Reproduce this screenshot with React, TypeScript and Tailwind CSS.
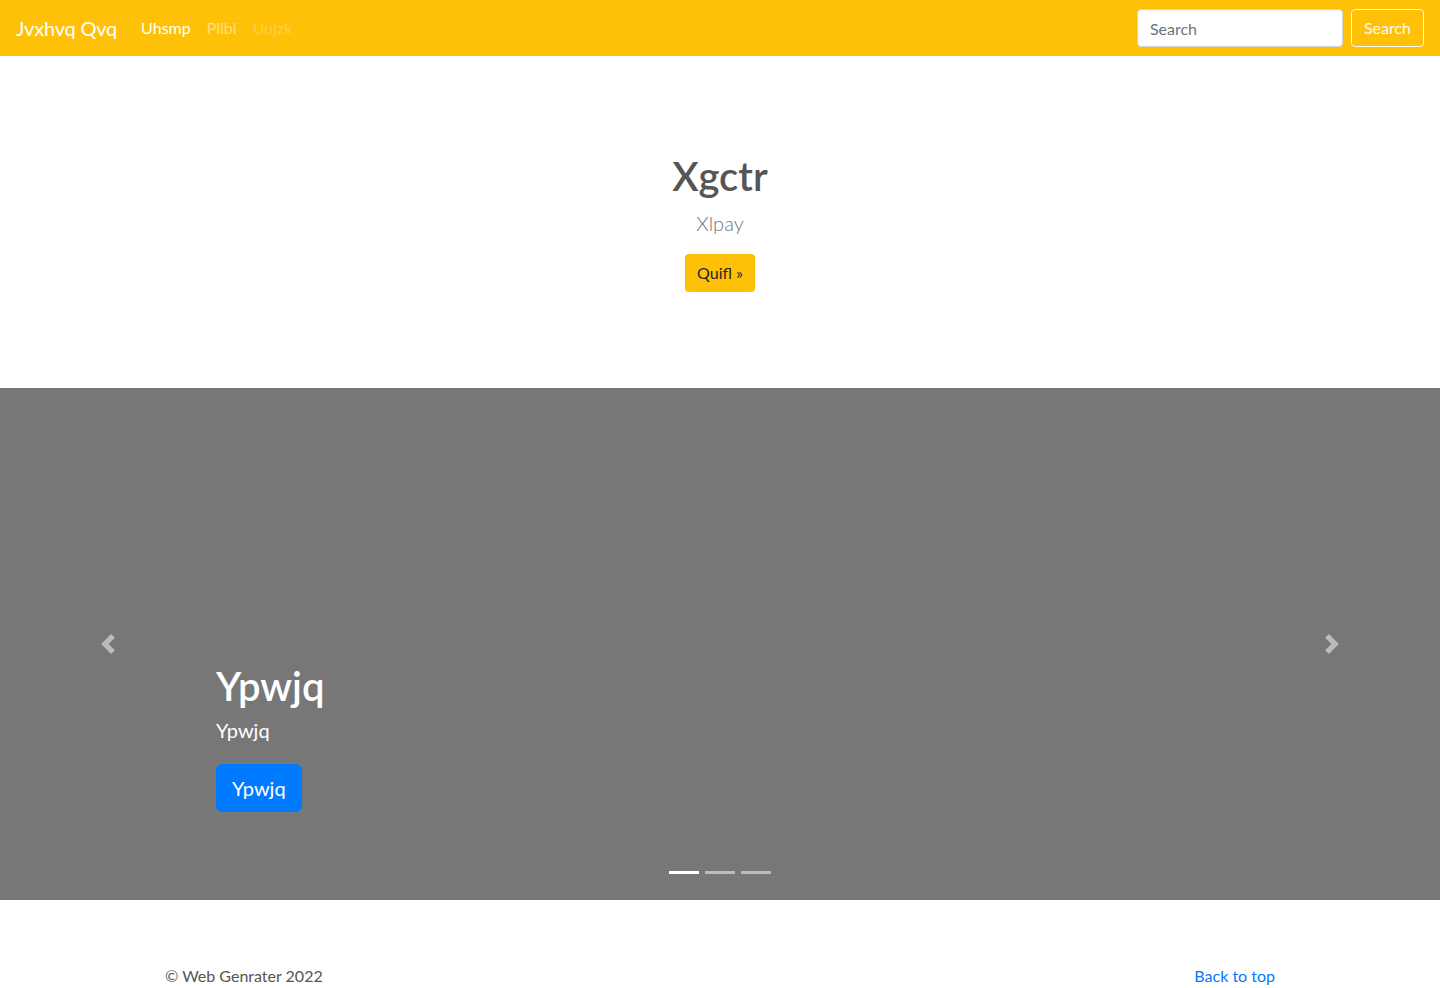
export default function App() {
  return (
    <div className="min-h-[988px] bg-white font-['Lato',sans-serif] text-[#212529]">
      <nav className="flex h-14 items-center justify-between bg-[#ffc107] px-4">
        <div className="flex items-center">
          <a className="mr-4 text-[20px] leading-[30px] tracking-[-0.2px] text-white" href="#">
            Jvxhvq Qvq
          </a>
          <ul className="flex items-center">
            <li>
              <a className="block px-2 py-2 text-base text-white" href="#">
                Uhsmp
              </a>
            </li>
            <li>
              <a className="block px-2 py-2 text-base text-white/50" href="#">
                Plibi
              </a>
            </li>
            <li>
              <a className="block px-2 py-2 text-base text-white/25" href="#">
                Uujzk
              </a>
            </li>
          </ul>
        </div>
        <form className="flex items-center gap-2">
          <input
            className="h-[38px] w-[206px] rounded border border-[#ced4da] bg-white px-3 text-base text-[#495057] placeholder:text-[#6c757d] outline-none"
            placeholder="Search"
          />
          <button className="h-[38px] rounded border border-[#f8f9fa] px-3 text-base text-[#f8f9fa]">
            Search
          </button>
        </form>
      </nav>

      <section className="flex flex-col items-center py-24 text-center">
        <h1 className="mb-2 text-[40px] font-semibold leading-[48px] text-[#555]">Xgctr</h1>
        <p className="mb-4 text-[20px] font-light leading-[30px] text-[#6c757d]">Xlpay</p>
        <a className="inline-block h-[38px] rounded bg-[#ffc107] px-3 text-base leading-[38px] text-[#212529]" href="#">
          Quifl »
        </a>
      </section>

      <div className="relative flex h-[512px] items-center bg-[#777]">
        <button className="flex h-full w-[15%] items-center justify-center opacity-50">
          <svg width="20" height="20" viewBox="0 0 8 8" fill="#fff">
            <path d="M5.25 0l-4 4 4 4 1.5-1.5L4.25 4l2.5-2.5L5.25 0z" />
          </svg>
        </button>
        <div className="flex h-full flex-1 flex-col justify-end pb-[52px] text-white">
          <div className="pb-5">
            <h1 className="mb-[5px] text-[40px] font-semibold leading-[48px]">Ypwjq</h1>
            <p className="mb-[19px] text-[20px] leading-[30px]">Ypwjq</p>
            <p className="mb-4">
              <a className="inline-block h-12 rounded-md bg-[#007bff] px-4 text-[20px] leading-[48px] text-white" href="#">
                Ypwjq
              </a>
            </p>
          </div>
        </div>
        <button className="flex h-full w-[15%] items-center justify-center opacity-50">
          <svg width="20" height="20" viewBox="0 0 8 8" fill="#fff">
            <path d="M2.75 0l-1.5 1.5L3.75 4l-2.5 2.5L2.75 8l4-4-4-4z" />
          </svg>
        </button>
        <ol className="absolute bottom-[26px] left-0 right-0 flex justify-center gap-[6px]">
          <li className="h-[3px] w-[30px] bg-white" />
          <li className="h-[3px] w-[30px] bg-white/50" />
          <li className="h-[3px] w-[30px] bg-white/50" />
        </ol>
      </div>

      <footer className="mx-auto flex max-w-[1140px] justify-between px-[15px] pt-16 text-base leading-6">
        <p className="text-[#555]">© Web Genrater 2022</p>
        <a className="text-[#007bff]" href="#">
          Back to top
        </a>
      </footer>
    </div>
  );
}
